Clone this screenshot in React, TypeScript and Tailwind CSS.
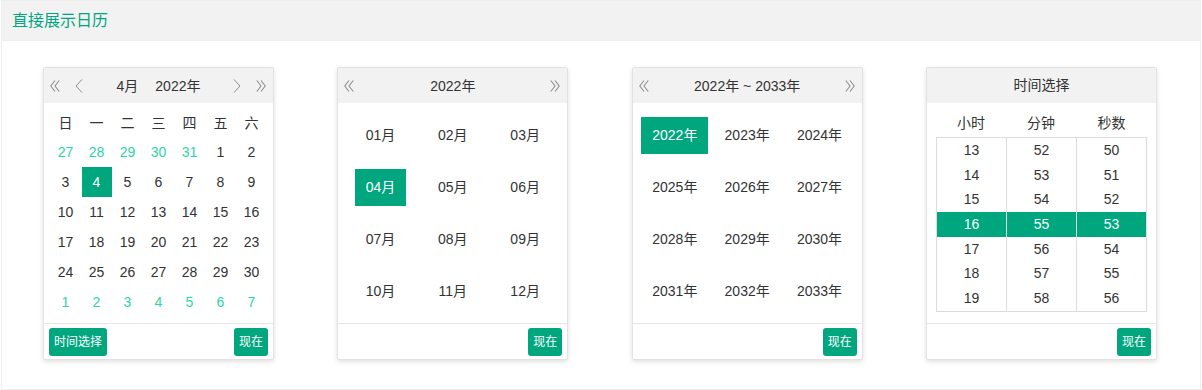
import React from 'react'

const WEEK = ['日', '一', '二', '三', '四', '五', '六']

type Day = { n: number; other?: boolean; on?: boolean }

const DAYS: Day[] = [
  ...[27, 28, 29, 30, 31].map((n) => ({ n, other: true })),
  ...Array.from({ length: 30 }, (_, i) => ({ n: i + 1, on: i + 1 === 4 })),
  ...[1, 2, 3, 4, 5, 6, 7].map((n) => ({ n, other: true })),
]

const MONTHS = ['01月', '02月', '03月', '04月', '05月', '06月', '07月', '08月', '09月', '10月', '11月', '12月']
const YEARS = Array.from({ length: 12 }, (_, i) => 2022 + i)

const HOURS = [13, 14, 15, 16, 17, 18, 19]
const MINUTES = [52, 53, 54, 55, 56, 57, 58]
const SECONDS = [50, 51, 52, 53, 54, 55, 56]

function DoubleLeft() {
  return (
    <svg width="10" height="12" viewBox="0 0 10 12" fill="none" stroke="#8f8f8f" strokeWidth="1.1">
      <path d="M5 0.5 L0.8 6 L5 11.5 M9.2 0.5 L5 6 L9.2 11.5" />
    </svg>
  )
}

function DoubleRight() {
  return (
    <svg width="10" height="12" viewBox="0 0 10 12" fill="none" stroke="#8f8f8f" strokeWidth="1.1">
      <path d="M0.8 0.5 L5 6 L0.8 11.5 M5 0.5 L9.2 6 L5 11.5" />
    </svg>
  )
}

function Left() {
  return (
    <svg width="8" height="14" viewBox="0 0 8 14" fill="none" stroke="#8f8f8f" strokeWidth="1">
      <path d="M7 0.5 L1 7 L7 13.5" />
    </svg>
  )
}

function Right() {
  return (
    <svg width="8" height="14" viewBox="0 0 8 14" fill="none" stroke="#8f8f8f" strokeWidth="1">
      <path d="M1 0.5 L7 7 L1 13.5" />
    </svg>
  )
}

function Panel({ header, children, footer }: { header: React.ReactNode; children: React.ReactNode; footer: React.ReactNode }) {
  return (
    <div className="flex h-[293px] w-[231px] shrink-0 flex-col overflow-hidden rounded-[2px] border border-[#e2e2e2] bg-white shadow-[0_2px_5px_rgba(0,0,0,0.12)]">
      <div className="h-[35px] bg-[#f2f2f2]">{header}</div>
      <div className="h-[220px]">{children}</div>
      <div className="flex h-[36px] items-center justify-between border-t border-[#e6e6e6] px-[5px]">{footer}</div>
    </div>
  )
}

function NavHeader({ left, right, children }: { left?: React.ReactNode; right?: React.ReactNode; children: React.ReactNode }) {
  return (
    <div className="grid h-full grid-cols-[1fr_auto_1fr] items-center px-[6px] text-[14px] text-[#333]">
      <div className="flex items-center gap-[15px]">{left}</div>
      <div className="flex items-center gap-[17px] leading-none">{children}</div>
      <div className="flex items-center justify-end gap-[15px] pr-px">{right}</div>
    </div>
  )
}

function Btn({ children }: { children: React.ReactNode }) {
  return (
    <span className="flex h-[28px] items-center rounded-[3px] bg-[#00a67e] px-[5px] text-[12px] leading-none text-white">
      {children}
    </span>
  )
}

export default function App() {
  return (
    <div className="h-[390px] bg-white font-[family-name:Liberation_Sans,Noto_Sans_CJK_SC,sans-serif]">
      <div className="ml-px h-[390px] w-[1200px] border border-[#eee]">
        <div className="flex h-[40px] items-center border-b border-[#eee] bg-[#f2f2f2] pl-[10px] text-[16px] text-[#00a67e]">
          直接展示日历
        </div>

        <div className="flex gap-[63.33px] pl-[41px] pt-[26px]">
          {/* day panel */}
          <Panel
            header={
              <NavHeader
                left={
                  <>
                    <DoubleLeft />
                    <Left />
                  </>
                }
                right={
                  <>
                    <Right />
                    <DoubleRight />
                  </>
                }
              >
                <span>4月</span>
                <span>2022年</span>
              </NavHeader>
            }
            footer={
              <>
                <Btn>时间选择</Btn>
                <Btn>现在</Btn>
              </>
            }
          >
            <div className="px-[6px] pt-[6px] text-[14px] text-[#333]">
              <div className="grid h-[28px] grid-cols-7 items-center text-center">
                {WEEK.map((w) => (
                  <span key={w}>{w}</span>
                ))}
              </div>
              <div className="grid grid-cols-7 text-center">
                {DAYS.map((d, i) => (
                  <span
                    key={i}
                    className={`flex h-[30px] items-center justify-center ${
                      d.on ? 'mx-auto w-[30px] bg-[#00a67e] text-white' : d.other ? 'text-[#2bd6a6]' : ''
                    }`}
                  >
                    {d.n}
                  </span>
                ))}
              </div>
            </div>
          </Panel>

          {/* month panel */}
          <Panel
            header={
              <NavHeader left={<DoubleLeft />} right={<DoubleRight />}>
                <span>2022年</span>
              </NavHeader>
            }
            footer={
              <>
                <span />
                <Btn>现在</Btn>
              </>
            }
          >
            <div className="grid grid-cols-3 px-[6px] pt-[6px] text-[14px] text-[#333]">
              {MONTHS.map((m) => (
                <div key={m} className="flex h-[52px] items-center justify-center">
                  <span
                    className={`flex h-[37px] w-[51px] items-center justify-center ${m === '04月' ? 'bg-[#00a67e] text-white' : ''}`}
                  >
                    {m}
                  </span>
                </div>
              ))}
            </div>
          </Panel>

          {/* year panel */}
          <Panel
            header={
              <NavHeader left={<DoubleLeft />} right={<DoubleRight />}>
                <span>2022年 ~ 2033年</span>
              </NavHeader>
            }
            footer={
              <>
                <span />
                <Btn>现在</Btn>
              </>
            }
          >
            <div className="grid grid-cols-3 px-[6px] pt-[6px] text-[14px] text-[#333]">
              {YEARS.map((y) => (
                <div key={y} className="flex h-[52px] items-center justify-center">
                  <span
                    className={`flex h-[37px] w-[67px] items-center justify-center ${y === 2022 ? 'bg-[#00a67e] text-white' : ''}`}
                  >
                    {y}年
                  </span>
                </div>
              ))}
            </div>
          </Panel>

          {/* time panel */}
          <Panel
            header={<div className="flex h-full items-center justify-center text-[14px] text-[#333]">时间选择</div>}
            footer={
              <>
                <span />
                <Btn>现在</Btn>
              </>
            }
          >
            <div className="px-[9px] pt-[6px] text-[14px] text-[#333]">
              <div className="grid h-[28px] grid-cols-[70px_70px_71px] items-center text-center">
                <span>小时</span>
                <span>分钟</span>
                <span>秒数</span>
              </div>
              <div className="flex w-[211px] border border-[#dcdcdc]">
                {[HOURS, MINUTES, SECONDS].map((col, ci) => (
                  <ul key={ci} className={ci === 0 ? 'w-[69px]' : 'w-[70px] border-l border-[#dcdcdc]'}>
                    {col.map((v, ri) => (
                      <li
                        key={v}
                        className={`flex h-[24.7px] items-center justify-center ${ri === 3 ? 'bg-[#00a67e] text-white' : ''}`}
                      >
                        {v}
                      </li>
                    ))}
                  </ul>
                ))}
              </div>
            </div>
          </Panel>
        </div>
      </div>
    </div>
  )
}
